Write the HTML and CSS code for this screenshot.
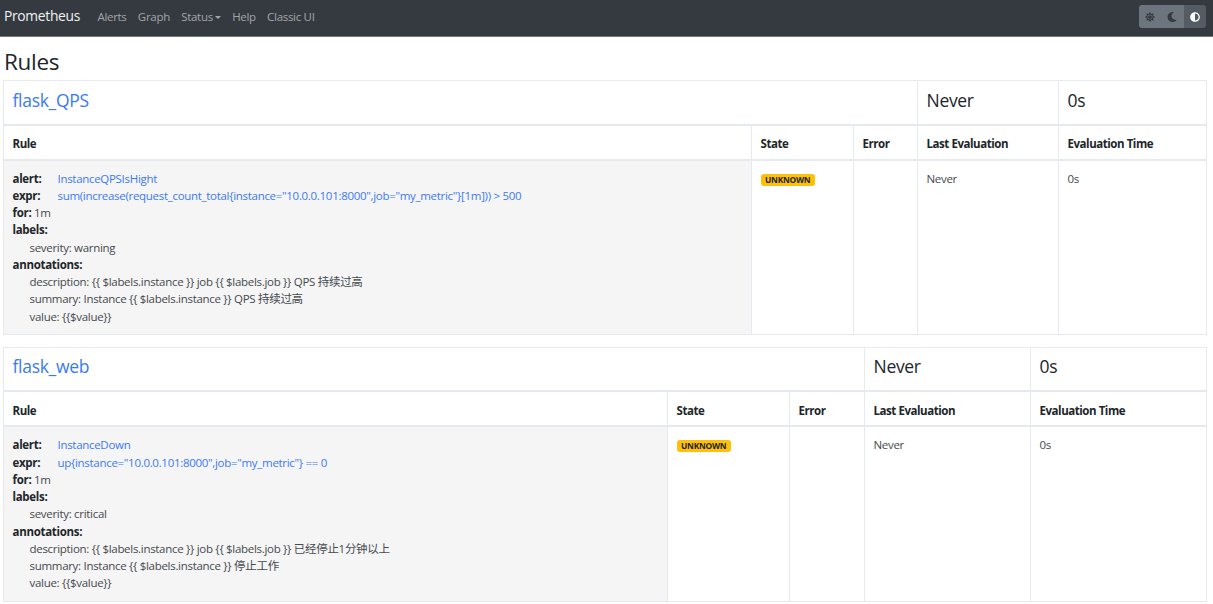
FILE: index.html
```html
<!DOCTYPE html>
<html lang="en">
<head>
    <meta charset="UTF-8">
    <meta name="viewport" content="width=device-width, initial-scale=1.0">
    <title>Prometheus Time Series Collection and Processing Server</title>
    <link rel="stylesheet" href="styles.css">
</head>
<body>
    <header class="navbar">
        <a href="#" class="brand">Prometheus</a>
        <nav class="nav-links">
            <a href="#">Alerts</a>
            <a href="#">Graph</a>
            <a href="#">Status<span class="caret"></span></a>
            <a href="#">Help</a>
            <a href="#">Classic UI</a>
        </nav>
        <div class="theme-toggle">
            <button class="theme-btn" type="button">
                <svg viewBox="0 0 512 512" width="10" height="10"><path fill="#343a40" d="M256 160c-52.900 0-96 43.100-96 96s43.100 96 96 96 96-43.100 96-96-43.100-96-96-96zm246.400 80.500l-94.700-47.300 33.500-100.400c4.500-13.600-8.400-26.500-21.900-21.900l-100.400 33.500-47.400-94.800c-6.400-12.800-24.600-12.800-31 0l-47.300 94.700L92.700 70.800c-13.600-4.500-26.500 8.400-21.900 21.900l33.500 100.400-94.700 47.400c-12.800 6.400-12.800 24.600 0 31l94.700 47.300-33.500 100.500c-4.500 13.600 8.400 26.500 21.900 21.900l100.400-33.500 47.300 94.700c6.400 12.800 24.600 12.800 31 0l47.300-94.700 100.400 33.500c13.600 4.500 26.500-8.400 21.900-21.900l-33.500-100.400 94.700-47.300c13-6.500 13-24.700.2-31.100zm-155.900 106c-49.900 49.900-131.100 49.900-181 0-49.900-49.900-49.900-131.100 0-181 49.900-49.900 131.100-49.900 181 0 49.900 49.900 49.900 131.100 0 181z"/></svg>
            </button>
            <button class="theme-btn" type="button">
                <svg viewBox="0 0 512 512" width="10" height="10"><path fill="#343a40" d="M283.211 512c78.962 0 151.079-35.925 198.857-94.792 7.068-8.708-.639-21.430-11.562-19.350-124.203 23.654-238.262-71.576-238.262-196.954 0-72.222 38.662-138.635 101.498-174.394 9.686-5.512 7.250-20.197-3.756-22.230A258.156 258.156 0 0 0 283.211 0c-141.309 0-256 114.511-256 256 0 141.309 114.511 256 256 256z"/></svg>
            </button>
            <button class="theme-btn theme-active" type="button">
                <svg viewBox="0 0 512 512" width="10" height="10"><path fill="#fff" d="M8 256c0 136.966 111.033 248 248 248s248-111.034 248-248S392.966 8 256 8 8 119.033 8 256zm248 184V72c101.705 0 184 82.311 184 184 0 101.705-82.311 184-184 184z"/></svg>
            </button>
        </div>
    </header>

    <main class="container">
        <h1 class="page-title">Rules</h1>

        <table class="group-table qps-cols">
            <colgroup><col class="c-name"><col class="c-last"><col class="c-time"></colgroup>
            <tr>
                <td class="group-name"><a href="#">flask_QPS</a></td>
                <td class="group-stat">Never</td>
                <td class="group-stat">0s</td>
            </tr>
        </table>
        <table class="rule-table qps-cols">
            <colgroup><col class="c-rule"><col class="c-state"><col class="c-error"><col class="c-last"><col class="c-time"></colgroup>
            <tr>
                <th>Rule</th>
                <th>State</th>
                <th>Error</th>
                <th>Last Evaluation</th>
                <th>Evaluation Time</th>
            </tr>
            <tr>
                <td class="rule-cell">
                    <div><b class="key">alert:</b><a href="#">InstanceQPSIsHight</a></div>
                    <div><b class="key">expr:</b><a href="#">sum(increase(request_count_total{instance="10.0.0.101:8000",job="my_metric"}[1m])) &gt; 500</a></div>
                    <div><b>for:</b> 1m</div>
                    <div><b>labels:</b></div>
                    <div class="indent">severity: warning</div>
                    <div><b>annotations:</b></div>
                    <div class="indent">description: {{ $labels.instance }} job {{ $labels.job }} QPS 持续过高</div>
                    <div class="indent">summary: Instance {{ $labels.instance }} QPS 持续过高</div>
                    <div class="indent">value: {{$value}}</div>
                </td>
                <td><span class="badge">UNKNOWN</span></td>
                <td></td>
                <td>Never</td>
                <td>0s</td>
            </tr>
        </table>

        <table class="group-table web-cols">
            <colgroup><col class="c-name"><col class="c-last"><col class="c-time"></colgroup>
            <tr>
                <td class="group-name"><a href="#">flask_web</a></td>
                <td class="group-stat">Never</td>
                <td class="group-stat">0s</td>
            </tr>
        </table>
        <table class="rule-table web-cols">
            <colgroup><col class="c-rule"><col class="c-state"><col class="c-error"><col class="c-last"><col class="c-time"></colgroup>
            <tr>
                <th>Rule</th>
                <th>State</th>
                <th>Error</th>
                <th>Last Evaluation</th>
                <th>Evaluation Time</th>
            </tr>
            <tr>
                <td class="rule-cell">
                    <div><b class="key">alert:</b><a href="#">InstanceDown</a></div>
                    <div><b class="key">expr:</b><a href="#">up{instance="10.0.0.101:8000",job="my_metric"} == 0</a></div>
                    <div><b>for:</b> 1m</div>
                    <div><b>labels:</b></div>
                    <div class="indent">severity: critical</div>
                    <div><b>annotations:</b></div>
                    <div class="indent">description: {{ $labels.instance }} job {{ $labels.job }} 已经停止1分钟以上</div>
                    <div class="indent">summary: Instance {{ $labels.instance }} 停止工作</div>
                    <div class="indent">value: {{$value}}</div>
                </td>
                <td><span class="badge">UNKNOWN</span></td>
                <td></td>
                <td>Never</td>
                <td>0s</td>
            </tr>
        </table>
    </main>
</body>
</html>
```

FILE: styles.css
```css
/* base */
* {
    box-sizing: border-box;
}

:root {
    --link: #3b7af5;
    --text: #212529;
    --text-light: #45494d;
    --line: #e6e9ed;
}

body {
    margin: 0;
    background: #fff;
    color: var(--text-light);
    font-family: 'Open Sans', 'Noto Sans CJK SC', sans-serif;
    font-size: 11.5px;
    line-height: 17.25px;
    letter-spacing: -0.3px;
}

a {
    color: var(--link);
    text-decoration: none;
}

b, th {
    color: var(--text);
    font-weight: 700;
}

/* navbar */
.navbar {
    display: flex;
    align-items: center;
    height: 37px;
    padding: 0 7px 3px 4px;
    background: #343a40;
    border-bottom: 1px solid #6f7478;
}

.brand {
    color: #f1f2f3;
    font-size: 13.8px;
    margin-right: 17.5px;
    margin-top: -2px;
}

.nav-links {
    display: flex;
    gap: 11.3px;
    flex: 1;
}

.nav-links a {
    color: #a3a6a9;
}

.caret {
    display: inline-block;
    margin-left: 2px;
    vertical-align: 2px;
    border-top: 3.5px solid #a3a6a9;
    border-left: 3.5px solid transparent;
    border-right: 3.5px solid transparent;
}

.theme-toggle {
    display: flex;
    height: 23px;
    border-radius: 3px;
    overflow: hidden;
}

.theme-btn {
    display: flex;
    align-items: center;
    justify-content: center;
    width: 22.5px;
    padding: 0;
    border: 0;
    background: #6c757d;
}

.theme-active {
    background: #545b62;
}

/* page */
.container {
    padding: 0 7px 0 3px;
}

.page-title {
    margin: 0;
    padding: 11px 0 0 1px;
    height: 43px;
    color: var(--text);
    font-size: 22.5px;
    line-height: 27px;
    font-weight: 500;
    letter-spacing: -0.3px;
}

/* tables */
table {
    width: 100%;
    table-layout: fixed;
    border-collapse: collapse;
}

td, th {
    border: 1px solid var(--line);
    padding: 9px 9px 9px 8.5px;
    text-align: left;
    vertical-align: top;
}

.group-table td {
    height: 44px;
    padding-top: 4px;
    padding-bottom: 8px;
    vertical-align: middle;
    border-bottom-width: 2px;
}

.group-name {
    font-size: 17.5px;
}

.group-stat {
    color: var(--text);
    font-size: 17.5px;
}

.rule-table {
    margin-bottom: 12px;
}

.rule-table th {
    height: 34px;
    padding-top: 9px;
    padding-bottom: 5px;
    vertical-align: middle;
    border-bottom-width: 2px;
    border-top: 0;
    letter-spacing: -0.45px;
}

.rule-cell {
    background: #f5f5f5;
}

.key {
    display: inline-block;
    width: 45px;
}

.indent {
    padding-left: 17px;
}

.badge {
    display: inline-block;
    padding: 0 4.5px;
    border-radius: 3px;
    background: #ffc107;
    color: #212529;
    font-size: 8.4px;
    font-weight: 700;
    line-height: 12px;
    letter-spacing: -0.25px;
    vertical-align: 0;
}

/* column widths */
.qps-cols .c-name { width: 914px; }
.qps-cols .c-rule { width: 748px; }
.qps-cols .c-state { width: 102px; }
.qps-cols .c-error { width: 64px; }
.qps-cols .c-last { width: 141px; }
.qps-cols .c-time { width: 148px; }

.web-cols .c-name { width: 861px; }
.web-cols .c-rule { width: 664px; }
.web-cols .c-state { width: 122px; }
.web-cols .c-error { width: 75px; }
.web-cols .c-last { width: 166px; }
.web-cols .c-time { width: 176px; }
```
